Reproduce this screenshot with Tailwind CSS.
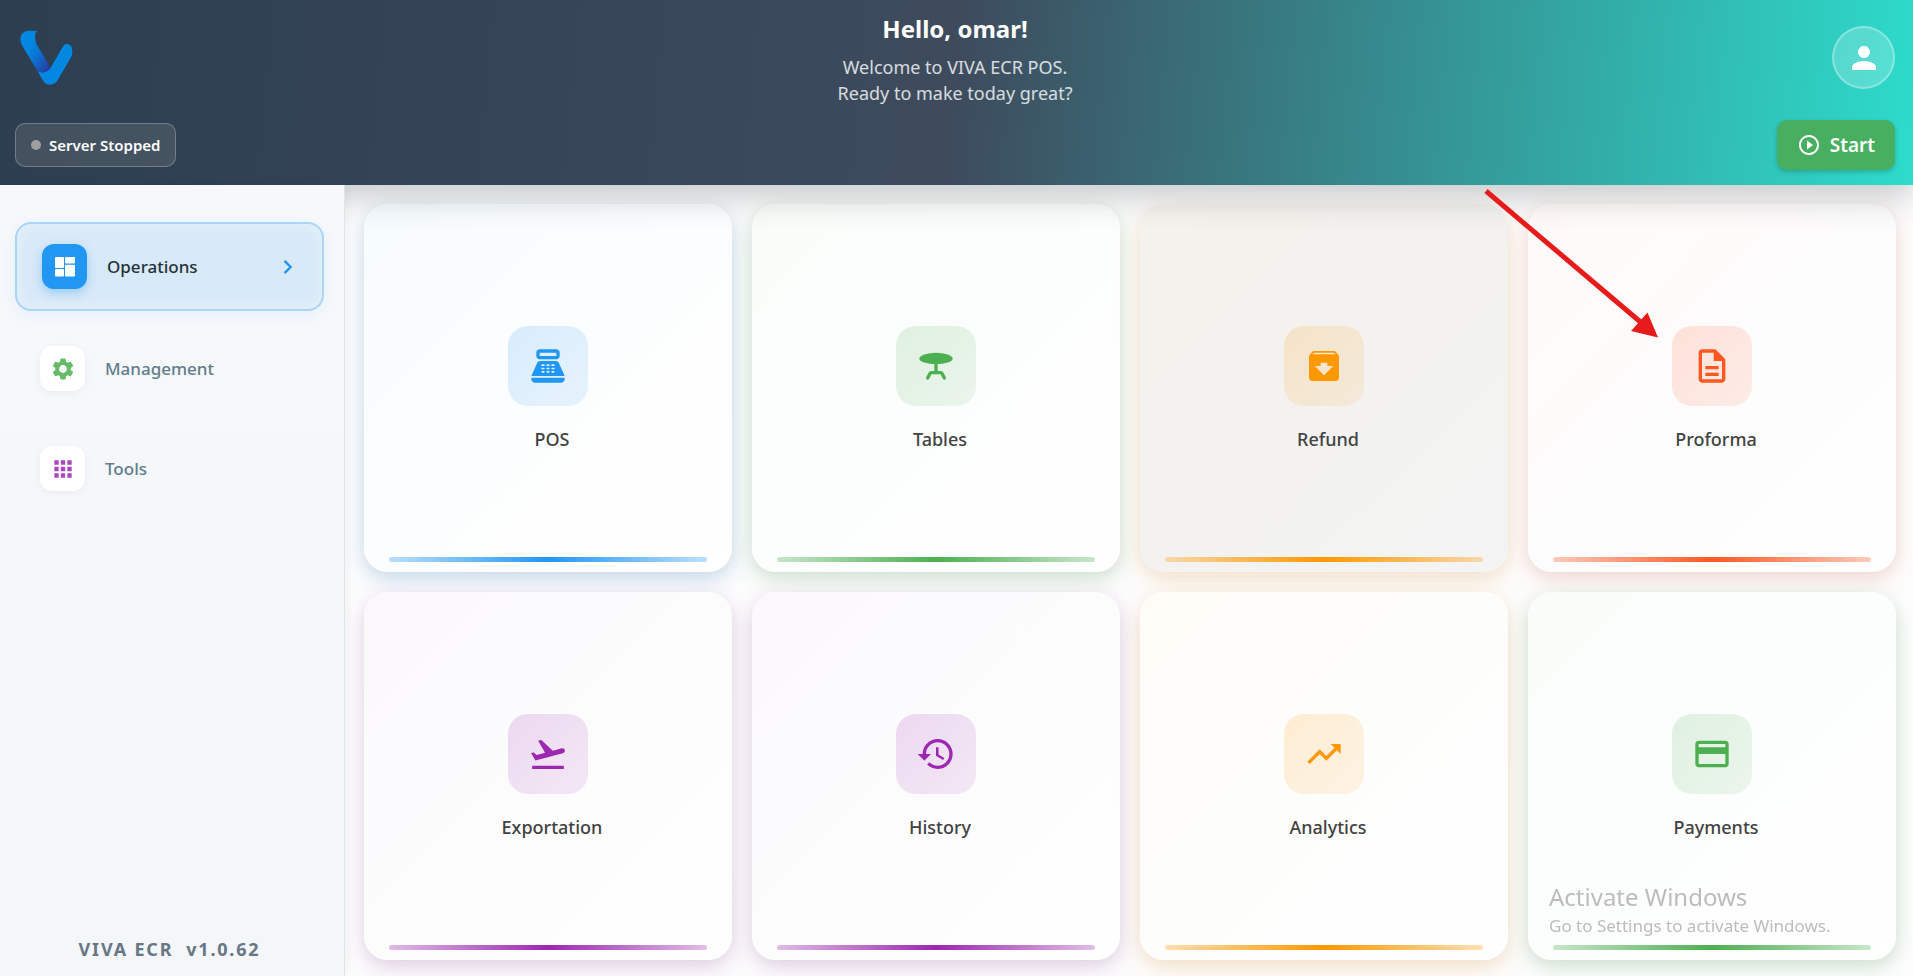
<!DOCTYPE html>
<html lang="en">
	<head>
		<meta charset="UTF-8" />
		<meta name="viewport" content="width=device-width, initial-scale=1.0" />
		<title>VIVA ECR POS</title>
		<script src="https://cdn.jsdelivr.net/npm/@tailwindcss/browser@4"></script>
	</head>
	<body class="font-['Noto_Sans','Open_Sans',sans-serif] bg-[#fdfdfd]">
		<div class="relative min-h-screen flex flex-col overflow-hidden">
			<!-- header -->
			<header
				class="relative z-10 pl-[15px] pr-[18px] pb-[15px] bg-[linear-gradient(95.5deg,#2c3e50_0%,#3d4b5d_50%,#2ddccc_100%)] shadow-[0_12px_30px_rgb(30_40_50/0.24)]"
			>
				<div class="grid grid-cols-[1fr_auto_1fr] items-start h-[120px]">
					<div class="pl-[5px] pt-[30px]">
						<svg class="w-[53px] h-[55px]" viewBox="60 90 158 164" role="img" aria-label="VIVA">
							<defs>
								<linearGradient id="fold" gradientUnits="userSpaceOnUse" x1="82" y1="150" x2="150" y2="190">
									<stop offset="0" stop-color="#0288e0" />
									<stop offset="0.45" stop-color="#0d6fd0" />
									<stop offset="1" stop-color="#2440a6" />
								</linearGradient>
							</defs>
							<path
								d="M112 212C125 219 141 216 151 203L187 141C191 133 196 131 202 132C212 134 217 143 216 155C216 163 214 169 210 175L174 237C168 248 160 253 150 253C140 253 133 248 127 238Z"
								fill="#0288e0"
							/>
							<path
								d="M111 93C103 99 103 116 110 133L151 203C141 217 124 220 112 212L67 137C61 127 60 118 62 109C66 98 76 92 88 92Z"
								fill="url(#fold)"
							/>
						</svg>
					</div>
					<div class="pt-[12px] text-center text-white">
						<h1 class="text-2xl leading-[34px] font-bold">Hello, omar!</h1>
						<p class="mt-[8px] text-lg leading-[26px] text-white/80">
							Welcome to VIVA ECR POS.<br />Ready to make today great?
						</p>
					</div>
					<div class="flex justify-end pt-[26px]">
						<button
							type="button"
							aria-label="Profile"
							class="size-[63px] flex items-center justify-center rounded-full border-2 border-white/30 bg-white/20"
						>
							<svg class="size-9" viewBox="0 0 24 24" fill="#fff">
								<path d="M12 12c2.21 0 4-1.79 4-4s-1.79-4-4-4-4 1.79-4 4 1.79 4 4 4zm0 2c-2.67 0-8 1.34-8 4v2h16v-2c0-2.66-5.33-4-8-4z" />
							</svg>
						</button>
					</div>
				</div>
				<div class="flex items-center justify-between">
					<div class="h-[44px] px-[15px] flex items-center gap-2 rounded-[10px] border border-white/25 bg-[#9e9e9e]/20">
						<span class="size-[10px] rounded-full bg-[#9e9e9e]"></span>
						<span class="text-[15px] leading-5 font-semibold text-white">Server Stopped</span>
					</div>
					<button
						type="button"
						class="h-[50px] px-5 flex items-center gap-[9px] rounded-[10px] bg-[#48af61] text-[19px] font-semibold text-white shadow-[0_2px_5px_rgb(0_0_0/0.2)]"
					>
						<svg class="size-6" viewBox="0 0 24 24" fill="#fff">
							<path d="M10 16.5l6-4.5-6-4.5v9zM12 2C6.48 2 2 6.48 2 12s4.48 10 10 10 10-4.48 10-10S17.52 2 12 2zm0 18c-4.41 0-8-3.59-8-8s3.59-8 8-8 8 3.59 8 8-3.59 8-8 8z" />
						</svg>
						Start
					</button>
				</div>
			</header>

			<div class="flex-1 flex">
				<!-- sidebar -->
				<aside
					class="relative z-20 w-[345px] shrink-0 flex flex-col justify-between pl-[15px] pr-[20px] pt-[37px] pb-[15px] border-r border-[#dde5ea] bg-linear-to-b from-[#f6f8fb] to-[#f4f6f9] shadow-[2px_0_10px_rgb(0_0_0/0.05)]"
				>
					<nav class="flex flex-col gap-[15px] text-[17px] font-medium text-[#607d8b]">
						<button
							type="button"
							class="px-[25px] py-5 flex items-center gap-5 rounded-2xl border-2 border-[#a9d5f9] bg-[#d8e9f8] text-left text-[#263238] shadow-[0_4px_15px_rgb(33_150_243/0.08),inset_0_0_16px_rgb(255_255_255/0.45)]"
						>
							<span class="size-[45px] flex items-center justify-center rounded-xl bg-[#2196f3] shadow-[0_4px_10px_rgb(33_150_243/0.35)]">
								<svg class="size-5" viewBox="0 0 20 20" fill="#fff">
									<rect width="9" height="11" rx="1" />
									<rect x="10" width="10" height="6.5" rx="1" />
									<rect y="12" width="9" height="7.5" rx="1" />
									<rect x="10" y="7.7" width="10" height="11.8" rx="1" />
								</svg>
							</span>
							<span class="flex-1">Operations</span>
							<svg class="w-[14px] h-[28px]" viewBox="8 0 12 24" fill="#2196f3">
								<path d="M10 6L8.59 7.41 13.17 12l-4.58 4.59L10 18l6-6z" />
							</svg>
						</button>
						<button type="button" class="px-[25px] py-5 flex items-center gap-5 text-left">
							<span class="size-[45px] flex items-center justify-center rounded-xl bg-white shadow-[0_2px_8px_rgb(0_0_0/0.05)]">
								<svg class="size-[26px]" viewBox="0 0 24 24" fill="#66bb6a">
									<path d="M19.14 12.94c.04-.3.06-.61.06-.94 0-.32-.02-.64-.07-.94l2.03-1.58c.18-.14.23-.41.12-.61l-1.92-3.32c-.12-.22-.37-.29-.59-.22l-2.39.96c-.5-.38-1.03-.7-1.62-.94l-.36-2.54c-.04-.24-.24-.41-.48-.41h-3.84c-.24 0-.43.17-.47.41l-.36 2.54c-.59.24-1.13.57-1.62.94l-2.39-.96c-.22-.08-.47 0-.59.22L2.74 8.87c-.12.21-.08.47.12.61l2.03 1.58c-.05.3-.09.63-.09.94s.02.64.07.94l-2.03 1.58c-.18.14-.23.41-.12.61l1.92 3.32c.12.22.37.29.59.22l2.39-.96c.5.38 1.03.7 1.62.94l.36 2.54c.05.24.24.41.48.41h3.84c.24 0 .44-.17.47-.41l.36-2.54c.59-.24 1.13-.56 1.62-.94l2.39.96c.22.08.47 0 .59-.22l1.92-3.32c.12-.22.07-.47-.12-.61l-2.01-1.58zM12 15.6c-1.98 0-3.6-1.62-3.6-3.6s1.62-3.6 3.6-3.6 3.6 1.62 3.6 3.6-1.62 3.6-3.6 3.6z" />
								</svg>
							</span>
							<span>Management</span>
						</button>
						<button type="button" class="px-[25px] py-5 flex items-center gap-5 text-left">
							<span class="size-[45px] flex items-center justify-center rounded-xl bg-white shadow-[0_2px_8px_rgb(0_0_0/0.05)]">
								<svg class="size-[26px]" viewBox="0 0 24 24" fill="#ab47bc">
									<path d="M4 8h4V4H4v4zm6 12h4v-4h-4v4zm-6 0h4v-4H4v4zm0-6h4v-4H4v4zm6 0h4v-4h-4v4zm6-10v4h4V4h-4zm-6 4h4V4h-4v4zm6 6h4v-4h-4v4zm0 6h4v-4h-4v4z" />
								</svg>
							</span>
							<span>Tools</span>
						</button>
					</nav>
					<p class="text-center text-lg leading-6 font-bold tracking-widest text-[#667785] whitespace-pre">VIVA ECR  v1.0.62</p>
				</aside>

				<!-- tiles -->
				<main class="flex-1 grid grid-cols-4 gap-5 content-start pl-[19px] pr-[17px] pt-[19px] pb-[16px] text-lg leading-6 font-medium text-[#424242]">
					<button
						type="button"
						class="aspect-square flex flex-col px-[25px] pt-[15px] pb-[10px] rounded-3xl bg-linear-135 from-[#f7fcff] via-[#fcfdfe] to-white shadow-[0_8px_25px_rgb(33_120_200/0.2),0_4px_15px_rgb(0_0_0/0.06)]"
					>
						<span class="flex-1 flex flex-col items-center justify-center gap-[21px]">
							<span class="size-20 flex items-center justify-center rounded-[20px] bg-linear-135 from-[#2196f3]/16 to-[#2196f3]/10">
								<svg class="size-10" viewBox="0 0 24 24" fill="#2196f3">
									<path fill-rule="evenodd" d="M17 2H7c-1.1 0-2 .9-2 2v2c0 1.1.9 2 2 2h10c1.1 0 2-.9 2-2V4c0-1.1-.9-2-2-2zm0 4H7V4h10v2zm3 16H4c-1.1 0-2-.9-2-2v-1h20v1c0 1.1-.9 2-2 2zM18.53 10.19C18.21 9.47 17.49 9 16.7 9H7.3c-.79 0-1.51.47-1.83 1.19L2 18h20l-3.47-7.81zM8.5 11h1a.5.5 0 010 1h-1a.5.5 0 010-1zm3 0h1a.5.5 0 010 1h-1a.5.5 0 010-1zm3 0h1a.5.5 0 010 1h-1a.5.5 0 010-1zm-6 2h1a.5.5 0 010 1h-1a.5.5 0 010-1zm3 0h1a.5.5 0 010 1h-1a.5.5 0 010-1zm3 0h1a.5.5 0 010 1h-1a.5.5 0 010-1zm-6 2h1a.5.5 0 010 1h-1a.5.5 0 010-1zm3 0h1a.5.5 0 010 1h-1a.5.5 0 010-1zm3 0h1a.5.5 0 010 1h-1a.5.5 0 010-1z" />
								</svg>
							</span>
							<span class="pl-2">POS</span>
						</span>
						<span class="h-[5px] rounded-full bg-linear-to-r from-[#2196f3]/30 via-[#2196f3] to-[#2196f3]/30"></span>
					</button>

					<button
						type="button"
						class="aspect-square flex flex-col px-[25px] pt-[15px] pb-[10px] rounded-3xl bg-linear-135 from-[#f9fdf9] via-[#fcfdfd] to-white shadow-[0_8px_25px_rgb(76_155_80/0.2),0_4px_15px_rgb(0_0_0/0.06)]"
					>
						<span class="flex-1 flex flex-col items-center justify-center gap-[21px]">
							<span class="size-20 flex items-center justify-center rounded-[20px] bg-linear-135 from-[#4caf50]/16 to-[#4caf50]/10">
								<svg class="size-10" viewBox="0 0 24 24" fill="#4caf50">
									<ellipse cx="12" cy="7.5" rx="10" ry="3.5" />
									<path d="M12 10v6M7 19.2l1.3-2.6c.2-.4.5-.6.9-.6h5.6c.4 0 .7.2.9.6l1.3 2.6" fill="none" stroke="#4caf50" stroke-width="2" stroke-linecap="round" stroke-linejoin="round" />
								</svg>
							</span>
							<span class="pl-2">Tables</span>
						</span>
						<span class="h-[5px] rounded-full bg-linear-to-r from-[#4caf50]/30 via-[#4caf50] to-[#4caf50]/30"></span>
					</button>

					<button
						type="button"
						class="aspect-square flex flex-col px-[25px] pt-[15px] pb-[10px] rounded-3xl bg-linear-135 from-[#f6f2ec] via-[#f3f2f0] to-[#f4f4f4] shadow-[0_8px_25px_rgb(230_150_50/0.22),0_4px_15px_rgb(0_0_0/0.04)]"
					>
						<span class="flex-1 flex flex-col items-center justify-center gap-[21px]">
							<span class="size-20 flex items-center justify-center rounded-[20px] bg-linear-135 from-[#ff9800]/16 to-[#ff9800]/10">
								<svg class="size-10" viewBox="0 0 24 24" fill="#ff9800">
									<path d="M20.54 5.23l-1.39-1.68C18.88 3.21 18.47 3 18 3H6c-.47 0-.88.21-1.16.55L3.46 5.23C3.17 5.57 3 6.02 3 6.5V19c0 1.1.9 2 2 2h14c1.1 0 2-.9 2-2V6.5c0-.48-.17-.93-.46-1.27zM12 17.5L6.5 12H10v-2h4v2h3.5L12 17.5zM5.12 5l.81-1h12l.94 1H5.12z" />
								</svg>
							</span>
							<span class="pl-2">Refund</span>
						</span>
						<span class="h-[5px] rounded-full bg-linear-to-r from-[#ff9800]/30 via-[#ff9800] to-[#ff9800]/30"></span>
					</button>

					<button
						type="button"
						class="aspect-square flex flex-col px-[25px] pt-[15px] pb-[10px] rounded-3xl bg-linear-135 from-[#fffaf8] via-[#fdfcfc] to-white shadow-[0_8px_25px_rgb(225_87_60/0.17),0_4px_15px_rgb(0_0_0/0.06)]"
					>
						<span class="flex-1 flex flex-col items-center justify-center gap-[21px]">
							<span class="size-20 flex items-center justify-center rounded-[20px] bg-linear-135 from-[#ff5722]/16 to-[#ff5722]/10">
								<svg class="size-10" viewBox="0 0 24 24" fill="#ff5722">
									<path d="M8 16h8v2H8zm0-4h8v2H8zm6-10H6c-1.1 0-2 .9-2 2v16c0 1.1.89 2 1.99 2H18c1.1 0 2-.9 2-2V8l-6-6zm4 18H6V4h7v5h5v11z" />
								</svg>
							</span>
							<span class="pl-2">Proforma</span>
						</span>
						<span class="h-[5px] rounded-full bg-linear-to-r from-[#ff5722]/30 via-[#ff5722] to-[#ff5722]/30"></span>
					</button>

					<button
						type="button"
						class="aspect-square flex flex-col px-[25px] pt-[15px] pb-[10px] rounded-3xl bg-linear-135 from-[#fbf8fc] via-[#fcfcfd] to-white shadow-[0_8px_25px_rgb(145_50_165/0.18),0_4px_15px_rgb(0_0_0/0.05)]"
					>
						<span class="flex-1 flex flex-col items-center justify-center gap-[21px]">
							<span class="size-20 flex items-center justify-center rounded-[20px] bg-linear-135 from-[#9c27b0]/16 to-[#9c27b0]/10">
								<svg class="size-10" viewBox="0 0 24 24" fill="#9c27b0">
									<path d="M2.5 19h19v2h-19v-2zm19.57-9.36c-.21-.8-1.04-1.28-1.84-1.06L14.92 10l-6.9-6.43-1.93.51 4.14 7.17-4.97 1.33-1.97-1.54-1.45.39 1.82 3.16.77 1.33 1.6-.43 5.31-1.42 4.35-1.16L21 11.49c.81-.23 1.28-1.05 1.07-1.85z" />
								</svg>
							</span>
							<span class="pl-2">Exportation</span>
						</span>
						<span class="h-[5px] rounded-full bg-linear-to-r from-[#9c27b0]/30 via-[#9c27b0] to-[#9c27b0]/30"></span>
					</button>

					<button
						type="button"
						class="aspect-square flex flex-col px-[25px] pt-[15px] pb-[10px] rounded-3xl bg-linear-135 from-[#fbf8fc] via-[#fcfcfd] to-white shadow-[0_8px_25px_rgb(145_50_165/0.18),0_4px_15px_rgb(0_0_0/0.05)]"
					>
						<span class="flex-1 flex flex-col items-center justify-center gap-[21px]">
							<span class="size-20 flex items-center justify-center rounded-[20px] bg-linear-135 from-[#9c27b0]/16 to-[#9c27b0]/10">
								<svg class="size-10" viewBox="0 0 24 24" fill="#9c27b0">
									<path d="M13 3c-4.97 0-9 4.03-9 9H1l3.89 3.89.07.14L9 12H6c0-3.87 3.13-7 7-7s7 3.13 7 7-3.13 7-7 7c-1.93 0-3.68-.79-4.94-2.06l-1.42 1.42C8.27 19.99 10.51 21 13 21c4.97 0 9-4.03 9-9s-4.03-9-9-9zm-1 5v5l4.28 2.54.72-1.21-3.5-2.08V8H12z" />
								</svg>
							</span>
							<span class="pl-2">History</span>
						</span>
						<span class="h-[5px] rounded-full bg-linear-to-r from-[#9c27b0]/30 via-[#9c27b0] to-[#9c27b0]/30"></span>
					</button>

					<button
						type="button"
						class="aspect-square flex flex-col px-[25px] pt-[15px] pb-[10px] rounded-3xl bg-linear-135 from-[#fffcf7] via-[#fdfdfc] to-white shadow-[0_8px_25px_rgb(230_150_50/0.22),0_4px_15px_rgb(0_0_0/0.04)]"
					>
						<span class="flex-1 flex flex-col items-center justify-center gap-[21px]">
							<span class="size-20 flex items-center justify-center rounded-[20px] bg-linear-135 from-[#ff9800]/16 to-[#ff9800]/10">
								<svg class="size-10" viewBox="0 0 24 24" fill="#ff9800">
									<path d="M16 6l2.29 2.29-4.88 4.88-4-4L2 16.59 3.41 18l6-6 4 4 6.3-6.29L22 12V6z" />
								</svg>
							</span>
							<span class="pl-2">Analytics</span>
						</span>
						<span class="h-[5px] rounded-full bg-linear-to-r from-[#ff9800]/30 via-[#ff9800] to-[#ff9800]/30"></span>
					</button>

					<button
						type="button"
						class="aspect-square flex flex-col px-[25px] pt-[15px] pb-[10px] rounded-3xl bg-linear-135 from-[#f9fdf9] via-[#fcfdfd] to-white shadow-[0_8px_25px_rgb(76_155_80/0.2),0_4px_15px_rgb(0_0_0/0.06)]"
					>
						<span class="flex-1 flex flex-col items-center justify-center gap-[21px]">
							<span class="size-20 flex items-center justify-center rounded-[20px] bg-linear-135 from-[#4caf50]/16 to-[#4caf50]/10">
								<svg class="size-10" viewBox="0 0 24 24" fill="#4caf50">
									<path d="M20 4H4c-1.11 0-1.99.89-1.99 2L2 18c0 1.11.89 2 2 2h16c1.11 0 2-.89 2-2V6c0-1.11-.89-2-2-2zm0 14H4v-6h16v6zm0-10H4V6h16v2z" />
								</svg>
							</span>
							<span class="pl-2">Payments</span>
						</span>
						<span class="h-[5px] rounded-full bg-linear-to-r from-[#4caf50]/30 via-[#4caf50] to-[#4caf50]/30"></span>
					</button>
				</main>
			</div>

			<!-- arrow pointing at Proforma -->
			<svg class="absolute z-30 right-[253px] top-[188px] w-[176px] h-[152px] pointer-events-none" viewBox="0 0 176 152">
				<path d="M2 3L160 137" stroke="#e81b1b" stroke-width="5" />
				<path d="M163.500 124.500L174 149.500L147 143Z" fill="#e81b1b" />
			</svg>

			<!-- activation watermark -->
			<div class="fixed z-30 right-0 bottom-[38px] w-[364px] text-[#bcbcbc] pointer-events-none">
				<p class="text-2xl leading-[34px]">Activate Windows</p>
				<p class="text-[17px] leading-6">Go to Settings to activate Windows.</p>
			</div>
		</div>
	</body>
</html>
